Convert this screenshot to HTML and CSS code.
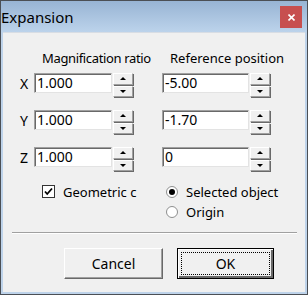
FILE: index.html
```html
<!DOCTYPE html>
<html>
<head>
<meta charset="utf-8">
<link rel="stylesheet" href="styles.css">
</head>
<body>
<div class="window">
  <div class="titlebar">
    <span class="title">Expansion</span>
    <div class="close"><svg width="7" height="7" viewBox="0 0 7 7"><path d="M0.5 0.5 L6.5 6.5 M6.5 0.5 L0.5 6.5" stroke="#fff" stroke-width="1.6"/></svg></div>
  </div>
  <div class="client">
    <div class="grid">
      <div></div>
      <div class="head tight">Magnification ratio</div>
      <div></div><div></div>
      <div class="head">Reference position</div>
      <div></div>

      <div class="lbl">X</div>
      <div class="edit">1.000</div>
      <div class="spin"><div class="sb"><i class="up"></i></div><div class="sb"><i class="dn"></i></div></div>
      <div></div>
      <div class="edit">-5.00</div>
      <div class="spin"><div class="sb"><i class="up"></i></div><div class="sb"><i class="dn"></i></div></div>

      <div class="lbl">Y</div>
      <div class="edit">1.000</div>
      <div class="spin"><div class="sb"><i class="up"></i></div><div class="sb"><i class="dn"></i></div></div>
      <div></div>
      <div class="edit">-1.70</div>
      <div class="spin"><div class="sb"><i class="up"></i></div><div class="sb"><i class="dn"></i></div></div>

      <div class="lbl">Z</div>
      <div class="edit">1.000</div>
      <div class="spin"><div class="sb"><i class="up"></i></div><div class="sb"><i class="dn"></i></div></div>
      <div></div>
      <div class="edit">0</div>
      <div class="spin"><div class="sb"><i class="up"></i></div><div class="sb"><i class="dn"></i></div></div>
    </div>

    <div class="opts">
      <div class="check">
        <span class="cbox"><svg width="9" height="9" viewBox="0 0 9 9"><path d="M1 4.5 L3.2 7 L8 1.5" fill="none" stroke="#000" stroke-width="1.8"/></svg></span>
        <span class="ctext">Geometric c</span>
      </div>
      <div class="radios">
        <div class="radio"><span class="rb on"></span><span>Selected object</span></div>
        <div class="radio"><span class="rb"></span><span>Origin</span></div>
      </div>
    </div>

    <div class="sep"></div>

    <div class="buttons">
      <div class="btn">Cancel</div>
      <div class="btn def"><span class="focus">OK</span></div>
    </div>
  </div>
</div>
</body>
</html>
```
FILE: styles.css
```css
html, body { margin: 0; padding: 0; background: #fff; }
body { font-family: "Noto Sans", "Open Sans", sans-serif; font-size: 13px; color: #000; }
.window {
  width: 306px; height: 293px;
  border: 1px solid #4b4f55;
  background: #bed3ea;
  display: flex; flex-direction: column;
}
.titlebar {
  height: 31px;
  background: linear-gradient(#98b4d4, #bcd3eb);
  display: flex; align-items: flex-start;
  padding-left: 0;
}
.title { font-size: 15px; line-height: 18px; margin-top: 7px; color: #000; flex: 1; }
.close {
  width: 22px; height: 22px; margin-top: 5px; margin-right: 5px;
  background: #c74f4f;
  display: flex; align-items: center; justify-content: center;
}
.client {
  flex: 1;
  margin: 0 2px 2px 2px;
  background: #f0f0f0;
  border-top: 1px solid #d8dde4;
}
.grid {
  display: grid;
  grid-template-columns: 14px 78px 21px 29px 87px 21px;
  grid-auto-rows: 37px;
  grid-template-rows: 40px;
  padding-left: 17px;
}
.head { align-self: start; margin-top: 17px; margin-left: 8px; white-space: nowrap; line-height: 16px; }
.head.tight { letter-spacing: -0.35px; }
.lbl { align-self: start; margin-top: 2px; font-size: 14px; line-height: 17px; margin-left: 0; }
.edit {
  height: 20px; box-sizing: border-box;
  background: #fff;
  border: 1px solid; border-color: #a0a0a0 #e3e3e3 #e3e3e3 #a0a0a0;
  box-shadow: inset 1px 1px 0 #696969;
  font-size: 14px; line-height: 18px; padding-left: 2px;
}
.spin { display: flex; flex-direction: column; height: 24px; margin-left: 1px; gap: 1px; }
.sb {
  flex: 1; box-sizing: border-box;
  background: #f0f0f0;
  border: 1px solid; border-color: #fff #a0a0a0 #a0a0a0 #fff;
  box-shadow: 1px 1px 0 #696969;
  display: flex; align-items: center; justify-content: center;
}
.sb i { width: 0; height: 0; border-left: 3px solid transparent; border-right: 3px solid transparent; }
.sb i.up { border-bottom: 3px solid #000; }
.sb i.dn { border-top: 3px solid #000; }
.opts { display: flex; margin-top: -2px; padding-left: 39px; height: 45px; }
.check { display: flex; align-items: flex-start; width: 124px; padding-top: 2px; }
.cbox {
  width: 13px; height: 13px; box-sizing: border-box;
  border: 1px solid #333; background: #fff;
  display: flex; align-items: center; justify-content: center;
  margin-top: 1px; margin-right: 8px;
}
.ctext { white-space: nowrap; line-height: 16px; }
.radios { display: flex; flex-direction: column; gap: 4px; padding-top: 2px; }
.radio { display: flex; align-items: center; line-height: 16px; }
.rb {
  width: 12px; height: 12px; box-sizing: border-box; border-radius: 50%;
  background: #fff; border: 1px solid #8e8f8f; margin-right: 8px; position: relative;
}
.rb.on::after {
  content: ""; position: absolute; left: 2px; top: 2px; width: 6px; height: 6px; border-radius: 50%; background: #000;
}
.sep { margin: 5px 8px 0 9px; height: 0; border-top: 1px solid #a0a0a0; border-bottom: 1px solid #fff; }
.buttons { display: flex; padding-left: 61px; gap: 14px; margin-top: 14px; }
.btn {
  width: 99px; height: 31px; box-sizing: border-box;
  background: #f0f0f0;
  border: 1px solid; border-color: #fff #696969 #696969 #fff;
  box-shadow: inset -1px -1px 0 #a0a0a0;
  display: flex; align-items: center; justify-content: center;
  font-size: 14px;
}
.btn.def { width: 97px; border: 1px solid #000; box-shadow: inset 1px 1px 0 #fff, inset -2px -2px 0 #696969; padding: 3px; }
.focus {
  flex: 1; align-self: stretch;
  border: 1px dotted #000;
  display: flex; align-items: center; justify-content: center;
}
```
